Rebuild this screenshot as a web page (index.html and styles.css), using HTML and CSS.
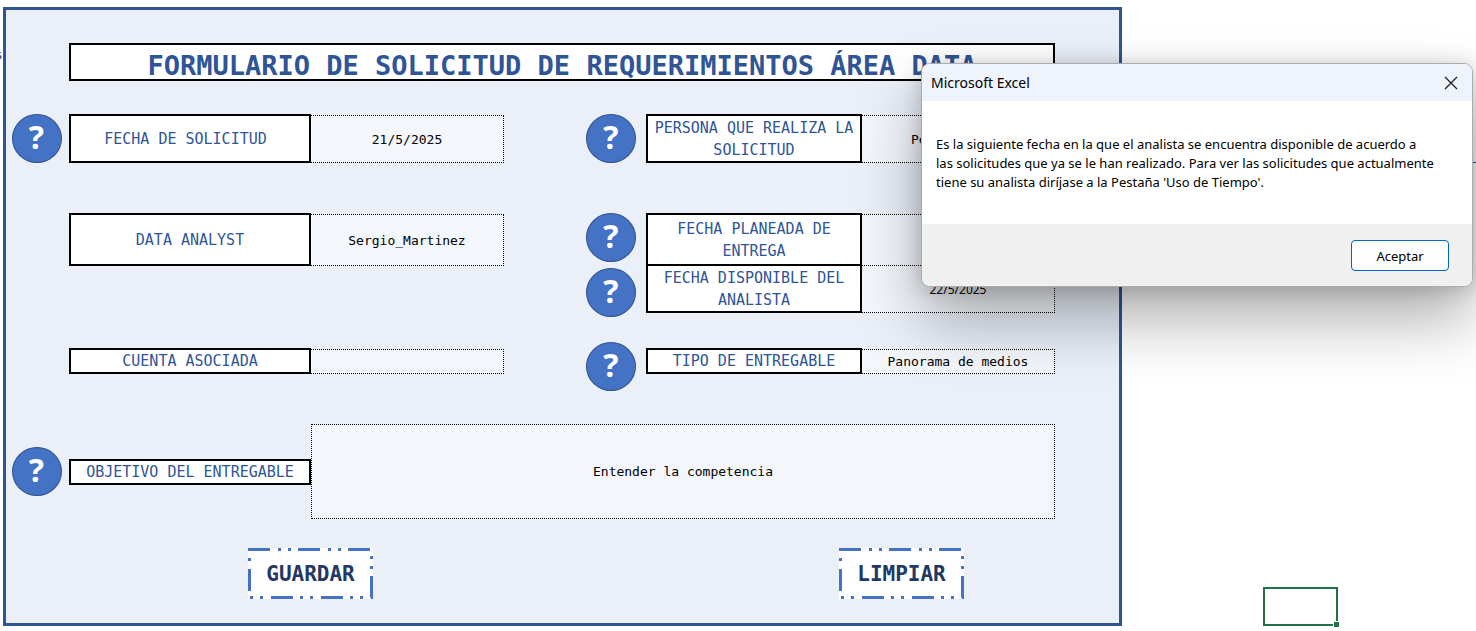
FILE: index.html
```html
<!DOCTYPE html>
<html lang="es">
<head>
<meta charset="utf-8">
<title>Formulario de solicitud</title>
<link rel="stylesheet" href="styles.css">
</head>
<body>
<div class="sheet">
  <div class="gutter"><span>s</span></div>

  <form class="form">
    <h1 class="title">FORMULARIO DE SOLICITUD DE REQUERIMIENTOS ÁREA DATA</h1>

    <div class="row row-request">
      <button type="button" class="help" aria-label="Ayuda: fecha de solicitud">?</button>
      <label class="label" for="fecha">FECHA DE SOLICITUD&nbsp;</label>
      <input class="value" id="fecha" type="text" value="21/5/2025">
      <button type="button" class="help help-mid" aria-label="Ayuda: persona">?</button>
      <label class="label" for="persona">PERSONA QUE REALIZA LA SOLICITUD</label>
      <input class="value" id="persona" type="text" value="Pepito Perez">
    </div>

    <div class="row row-analyst">
      <label class="label col-label" for="analyst">DATA ANALYST</label>
      <input class="value" id="analyst" type="text" value="Sergio_Martinez">
      <button type="button" class="help help-mid help-top" aria-label="Ayuda: fecha planeada">?</button>
      <label class="label" for="planeada">FECHA PLANEADA DE ENTREGA</label>
      <input class="value" id="planeada" type="text">
    </div>

    <div class="row row-available">
      <button type="button" class="help help-mid help-low" aria-label="Ayuda: fecha disponible">?</button>
      <label class="label" for="disponible">FECHA DISPONIBLE DEL ANALISTA</label>
      <input class="value value-date" id="disponible" type="text" value="22/5/2025">
    </div>

    <div class="row row-account">
      <label class="label col-label" for="cuenta">CUENTA ASOCIADA</label>
      <input class="value" id="cuenta" type="text">
      <button type="button" class="help help-mid" aria-label="Ayuda: tipo de entregable">?</button>
      <label class="label" for="tipo">TIPO DE ENTREGABLE</label>
      <input class="value" id="tipo" type="text" value="Panorama de medios">
    </div>

    <div class="row row-goal">
      <button type="button" class="help" aria-label="Ayuda: objetivo">?</button>
      <label class="label" for="objetivo">OBJETIVO DEL ENTREGABLE</label>
      <textarea class="value value-goal" id="objetivo" rows="1">Entender la competencia</textarea>
    </div>

    <div class="actions">
      <button type="button" class="action">
        <svg class="frame" viewBox="0 0 125 51" aria-hidden="true"><path d="M0 1.5H123.5V49.5H1.5V0"/></svg>
        <span>GUARDAR</span>
      </button>
      <button type="button" class="action">
        <svg class="frame" viewBox="0 0 125 51" aria-hidden="true"><path d="M0 1.5H123.5V49.5H1.5V0"/></svg>
        <span>LIMPIAR</span>
      </button>
    </div>
  </form>

  <div class="side">
    <div class="rule"></div>
    <div class="selected"><span class="handle"></span></div>
  </div>
</div>

<section class="dialog" role="dialog" aria-labelledby="dialog-title">
  <header class="dialog-head">
    <h2 id="dialog-title">Microsoft Excel</h2>
    <button type="button" class="close" aria-label="Cerrar">
      <svg viewBox="0 0 14 14" width="14" height="14"><path d="M1 1L13 13M13 1L1 13"/></svg>
    </button>
  </header>
  <p class="dialog-text">Es la siguiente fecha en la que el analista se encuentra disponible de acuerdo a<br>las solicitudes que ya se le han realizado. Para ver las solicitudes que actualmente<br>tiene su analista diríjase a la Pestaña 'Uso de Tiempo'.</p>
  <footer class="dialog-foot">
    <button type="button" class="accept">Aceptar</button>
  </footer>
</section>
</body>
</html>
```
FILE: styles.css
```css
* { box-sizing: border-box; }

body {
  margin: 0;
  background: #fff;
  font-family: "Noto Sans", sans-serif;
}

button { padding: 0; border: 0; cursor: pointer; }

.sheet {
  display: flex;
  padding: 7px 0 5px;
}

.gutter {
  display: flex;
  justify-content: flex-end;
  width: 3px;
  padding: 38px 1px 0 0;
  overflow: hidden;
  font-size: 13px;
  line-height: 18px;
  color: #1f3864;
}

.form {
  flex: 1;
  min-width: 0;
  padding: 33px 0 24px;
  border: 3px solid #2f5597;
  background: #eaeff8;
}

.title {
  margin: 0 64px 0 63px;
  padding-top: 8px;
  border: 2px solid #000;
  background: #fff;
  color: #2f5597;
  font: bold 27px/26px "DejaVu Sans Mono", monospace;
  text-align: center;
  white-space: nowrap;
}

.row {
  display: grid;
  grid-template-columns: 63px 242fr 193fr 142fr 216fr 193fr;
  padding-right: 64px;
}

.row-request { min-height: 49px; margin-top: 33px; }
.row-analyst { min-height: 53px; margin-top: 50px; }
.row-available { min-height: 49px; margin-top: -2px; }
.row-account { margin-top: 29px; align-items: start; }
.row-goal { margin-top: 33px; align-items: center; }

.col-label { grid-column: 2; }

.help {
  justify-self: center;
  align-self: center;
  width: 50px;
  height: 49px;
  margin-right: 2px;
  padding-bottom: 4px;
  border: 1px solid #2f528f;
  border-radius: 50%;
  background: #4472c4;
  color: #fff;
  font: bold 32px/42px "Open Sans", sans-serif;
}

.help-mid {
  grid-column: 4;
  justify-self: end;
  margin-right: 10px;
}

.help-top { align-self: start; }
.help-low { margin-top: 4px; margin-bottom: -4px; }

.label {
  display: flex;
  align-items: center;
  justify-content: center;
  border: 2px solid #000;
  background: #fff;
  color: #2f5597;
  font: 15px/22px "DejaVu Sans Mono", monospace;
  text-align: center;
}

.value {
  width: 100%;
  min-width: 0;
  margin: 1px 0 0;
  padding: 2px 0 0;
  border: 1px dotted #000;
  border-left: 0;
  border-radius: 0;
  background: #f3f6fb;
  color: #000;
  font: 13px/18px "DejaVu Sans Mono", monospace;
  text-align: center;
}

.value-date { font: 12px/18px "Noto Sans", sans-serif; }

.row-account .label { min-height: 26px; margin-top: 6px; }
.row-account .value { height: 25px; margin-top: 7px; padding: 0; }

.value-goal {
  grid-column: 3 / -1;
  height: 95px;
  margin: 0;
  padding: 38px 0;
  border-left: 1px dotted #000;
  resize: none;
  overflow: hidden;
}

.actions {
  display: flex;
  justify-content: space-between;
  margin-top: 29px;
  padding: 0 155px 0 242px;
}

.action {
  display: grid;
  place-items: center;
  width: 125px;
  height: 51px;
  background: #fff;
  color: #1f3864;
  font: bold 21px/24px "DejaVu Sans Mono", monospace;
}

.action > * { grid-area: 1 / 1; }

.frame {
  width: 125px;
  height: 51px;
  fill: none;
  stroke: #4472c4;
  stroke-width: 3;
  stroke-dasharray: 22 8 3 7 3 7;
}

.side {
  display: flex;
  flex-direction: column;
  width: 354px;
}

.rule { height: 156px; border-bottom: 1px solid #2f5597; }

.selected {
  position: relative;
  width: 75px;
  height: 39px;
  margin: auto 0 0 141px;
  border: 2px solid #217346;
}

.handle {
  position: absolute;
  right: -3px;
  bottom: -3px;
  width: 5px;
  height: 5px;
  background: #217346;
  box-shadow: 0 0 0 1px #fff;
}

.dialog {
  position: absolute;
  top: 63px;
  right: 3px;
  width: 552px;
  border: 1px solid #a9abae;
  border-radius: 9px;
  background: #fff;
  overflow: hidden;
  box-shadow: 0 32px 64px rgba(0, 0, 0, 0.32), 0 2px 20px rgba(0, 0, 0, 0.18);
}

.dialog-head {
  display: flex;
  align-items: center;
  justify-content: space-between;
  height: 37px;
  padding: 0 14px 0 9px;
  background: #eff3fb;
}

.dialog-head h2 {
  margin: 0;
  font: 14px/20px "Noto Sans", sans-serif;
}

.close { display: flex; background: none; }
.close path { stroke: #1a1a1a; stroke-width: 1.2; fill: none; }

.dialog-text {
  margin: 0;
  padding: 34px 14px 32px;
  font-size: 13px;
  line-height: 19px;
  white-space: nowrap;
}

.dialog-foot {
  display: flex;
  justify-content: flex-end;
  padding: 16px 23px 15px;
  background: #f0f0f0;
}

.accept {
  width: 98px;
  height: 31px;
  border: 1px solid #0067c0;
  border-radius: 4px;
  background: #fdfdfd;
  color: #000;
  font: 13px/18px "Noto Sans", sans-serif;
}
```
